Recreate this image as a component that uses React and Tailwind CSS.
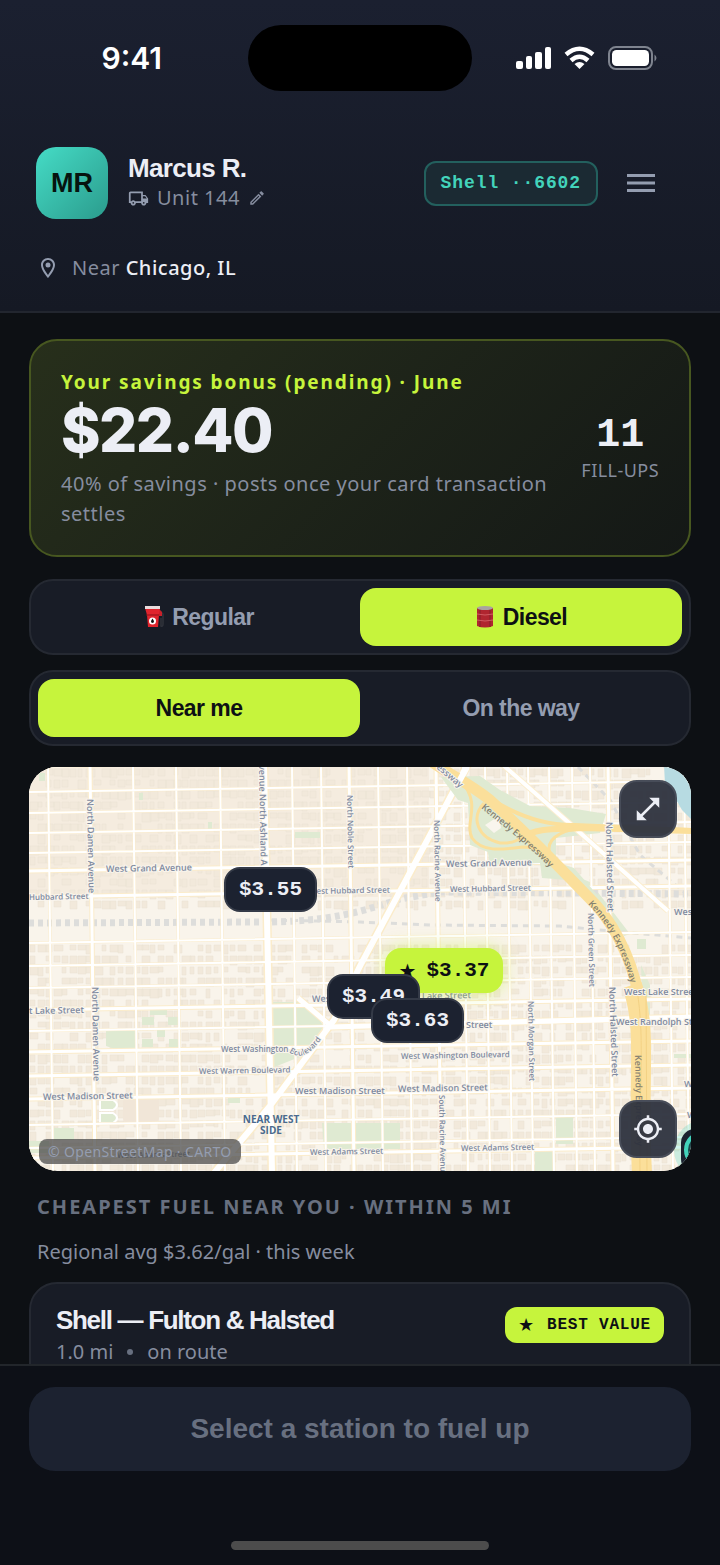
import React, { useState } from "react";
import {
  MdMyLocation,
  MdOpenInFull,
  MdOutlineEdit,
  MdOutlineLocalShipping,
  MdOutlineLocationOn,
} from "react-icons/md";

const head = "font-['Liberation_Sans',Arial,sans-serif]";
const body = "font-['Noto_Sans','Open_Sans',sans-serif]";
const mono = "font-['Liberation_Mono','Courier_New',monospace]";

// ---------- map data, in map units ----------
// every street leans the same way, so one x (or y) at the edge is enough
const minorV = [48, 133, 176, 220, 292, 321, 378, 407, 463, 485, 507, 528, 549, 572, 590, 668, 684];
const minorH = [767, 792, 813, 833, 853, 943, 966, 988, 1031, 1125, 1148];
const mainV = [90, 349, 436, 608];
const mainH = [871, 897, 1010, 1052, 1076, 1099, 1158];

const parks = [
  "M272 1002h35l18 26-13 24-40 16z",
  "M150 1008h17v7h-17zM142 1017h12v8h-12zM168 1017h12v8h-12zM106 1030h31v19h-22l-9-3z",
  "M142 1039h11v8h-11zM157 1029h8v8h-8zM169 1039h12v9h-12z",
  "M322 1123h78v26h-76zM228 1096h12v7h-12zM52 1128h22v12H52zM29 1141h20v12H29z",
  "M556 1117h17v27h-17zM535 1150h18v21h-18zM295 832h25v6h-25zM139 793h4v7h-4z",
  "M39 773h6v8h-6zM208 822h4v8h-4zM637 939h9v10h-9zM674 1054h17v4h-17z",
  "M580 878l10 4 40 52-6 2-20-22zM641 965l9 20v80l-6-10z",
];

const labels = [
  { t: "West Grand Avenue", x: 106, y: 872, r: -1, s: 9 },
  { t: "Hubbard Street", x: 29, y: 900, r: -1, s: 8 },
  { t: "North Damen Avenue", x: 87, y: 799, r: 89, s: 9 },
  { t: "North Damen Avenue", x: 92, y: 987, r: 89, s: 9 },
  { t: "venue North Ashland A", x: 259, y: 765, r: 89, s: 9 },
  { t: "North Noble Street", x: 347, y: 795, r: 89, s: 8 },
  { t: "West Hubbard Street", x: 309, y: 894, r: -1, s: 8 },
  { t: "West Grand Avenue", x: 446, y: 867, r: -1, s: 9 },
  { t: "West Hubbard Street", x: 450, y: 892, r: -1, s: 8 },
  { t: "North Racine Avenue", x: 434, y: 820, r: 89, s: 8 },
  { t: "North Halsted Street", x: 606, y: 822, r: 89, s: 9 },
  { t: "North Green Street", x: 588, y: 913, r: 89, s: 8 },
  { t: "North Halsted Street", x: 609, y: 987, r: 88, s: 9 },
  { t: "North Morgan Street", x: 528, y: 1001, r: 89, s: 8 },
  { t: "South Racine Avenue", x: 439, y: 1095, r: 89, s: 8 },
  { t: "t Lake Street", x: 29, y: 1014, r: -1, s: 9 },
  { t: "West Lake Street", x: 312, y: 1002, r: -1, s: 9 },
  { t: "Lake Street", x: 422, y: 999, r: -1, s: 9 },
  { t: "West Lake Street", x: 624, y: 995, r: 0, s: 9 },
  { t: "West Randolph Street", x: 616, y: 1025, r: 0, s: 9 },
  { t: "Street", x: 466, y: 1028, r: 0, s: 9 },
  { t: "West Washington", x: 221, y: 1052, r: 0, s: 8 },
  { t: "West Warren Boulevard", x: 199, y: 1074, r: -1, s: 8 },
  { t: "West Washington Boulevard", x: 401, y: 1059, r: -1, s: 8 },
  { t: "West Madison Street", x: 43, y: 1100, r: -1, s: 9 },
  { t: "West Madison Street", x: 295, y: 1094, r: 0, s: 9 },
  { t: "West Madison Street", x: 398, y: 1092, r: -1, s: 9 },
  { t: "West Adams Street", x: 117, y: 1158, r: -1, s: 8 },
  { t: "West Adams Street", x: 310, y: 1155, r: -1, s: 8 },
  { t: "West Adams Street", x: 461, y: 1151, r: -1, s: 8 },
  { t: "West", x: 674, y: 915, r: 0, s: 9 },
  { t: "West", x: 684, y: 1087, r: 0, s: 9 },
  { t: "West", x: 687, y: 1118, r: 0, s: 9 },
  { t: "essway", x: 436, y: 768, r: 40, s: 9 },
];

const KENNEDY =
  "M432 762C452 776 470 784 490 800C530 836 560 868 596 905C620 932 636 972 640 1005C644 1060 642 1110 642 1175";

// small building footprints, same ones on every render
const buildings = [];
let seed = 7;
const rand = () => {
  seed = (seed * 16807) % 2147483647;
  return seed / 2147483647;
};
for (let y = 769; y < 1170; y += 11) {
  for (let x = 30; x < 690; x += 8) {
    if (y > 905 && y < 938) continue;
    if (rand() < 0.22) continue;
    const w = 4 + Math.round(rand() * 5);
    const h = 5 + Math.round(rand() * 4);
    buildings.push(`M${x} ${y}h${w}v${h}h-${w}z`);
  }
}

const vPath = (xs) => xs.map((x) => `M${x} 765L${x + 5} 1173`).join("");
const hPath = (ys) => ys.map((y) => `M27 ${y}L693 ${y - 11}`).join("");
const OGDEN = "M469 762L360 966L334 1020L270 1106L214 1173";
const MILWAUKEE = "M503 765L568 822L668 911";
const ASHLAND = "M264 765L272 1173";
const RANDOLPH = "M298 998L332 1027L693 1017";

function FuelMap() {
  return (
    <svg
      viewBox="29 767 662 404"
      preserveAspectRatio="xMidYMid slice"
      className="block h-full w-full font-['Open_Sans',sans-serif]"
      role="img"
      aria-label="Map of Near West Side"
    >
      <rect x="29" y="767" width="662" height="404" fill="#f9f4eb" />
      <rect x="29" y="767" width="400" height="130" fill="#f5ecdf" />
      <path d={buildings.join("")} fill="#f2e9db" stroke="#ebe0d0" strokeWidth="0.5" />
      {parks.map((d) => (
        <path key={d} d={d} fill="#dfead2" />
      ))}
      <rect x="123" y="1097" width="36" height="27" rx="5" fill="#f1e6d8" />
      <path d="M100 1100h13q8 5 0 10h-13zM100 1113h13q8 5 0 10h-13z" fill="#dfead2" stroke="#fff" strokeWidth="2" />

      {/* rail yards */}
      <g fill="none" stroke="#dddddb">
        <path d="M29 923L260 922C330 922 360 912 400 899L440 892L691 894" strokeWidth="7" strokeDasharray="5 4" />
        <path d="M270 920L360 922L430 925L560 926L610 931L691 938" strokeWidth="3" strokeDasharray="6 5" />
        <path d="M578 767L610 800L640 855L691 898" strokeWidth="3" strokeDasharray="6 5" />
      </g>

      {/* streets: casing first, then the fill */}
      <g fill="none" stroke="#fbeccb">
        <path d={vPath(minorV) + hPath(minorH)} strokeWidth="3" />
        <path d={vPath(mainV) + hPath(mainH)} strokeWidth="5" />
        <path d={OGDEN + ASHLAND} strokeWidth="9" />
        <path d={RANDOLPH} strokeWidth="7" />
      </g>
      <g fill="none" stroke="#ffffff">
        <path d={vPath(minorV) + hPath(minorH)} strokeWidth="2" />
        <path d={vPath(mainV) + hPath(mainH)} strokeWidth="3" />
        <path d={OGDEN + ASHLAND} strokeWidth="6" />
        <path d={RANDOLPH} strokeWidth="5" />
      </g>

      {/* interchange */}
      <path
        d="M441 777L458 800L468 803L470 845L488 852L490 865L540 863L542 878L568 880L590 900L600 898L574 868L556 862L556 838L600 833L606 814L570 808L530 806L500 790L480 776z"
        fill="#dfead2"
      />
      <path d="M485 825l14-9 2 12-7 5z" fill="#f9f5ed" />
      <path d={MILWAUKEE} fill="none" stroke="#fbeed0" strokeWidth="6" />
      <path d={MILWAUKEE} fill="none" stroke="#fff" strokeWidth="4" />
      <path d="M664 765h30v57l-12-12-8-14-9-12z" fill="#b7dbe2" />
      <g fill="none" stroke="#fbdf9a">
        <path d="M462 782C482 806 464 822 472 838C482 852 500 850 522 847C538 847 546 852 556 864" strokeWidth="3" />
        <path d="M484 803C470 818 478 838 500 843C514 844 520 839 526 834" strokeWidth="3" />
        <path d="M468 783C500 808 535 826 575 825L691 830" strokeWidth="4" />
        <path d="M520 838C540 826 560 830 582 828L691 831" strokeWidth="6" />
        <path d="M552 858C544 845 552 834 574 829" strokeWidth="3" />
        <path d={KENNEDY} strokeWidth="11" />
        <path d="M632 985C648 1030 637 1070 642 1175" strokeWidth="20" />
      </g>
      <path d="M637 990C645 1040 639 1080 640 1173M646 990L647 1173" fill="none" stroke="#f3d184" strokeWidth="1" />
      <path d="M467 767L456 787" stroke="#fff" strokeWidth="6" />

      <path id="boulevard" d="M289 1052Q306 1065 326 1032" fill="none" />
      <g fill="#7f8a9f" fontWeight="600" stroke="#f9f5ed" strokeWidth="2" paintOrder="stroke">
        {labels.map(({ t, x, y, r, s }) => (
          <text key={`${t}${x}${y}`} fontSize={s} transform={`translate(${x} ${y}) rotate(${r})`}>
            {t}
          </text>
        ))}
        <text fontSize="8">
          <textPath href="#boulevard">Boulevard</textPath>
        </text>
      </g>
      <g fill="#84806f" fontSize="9" fontWeight="600">
        <path id="kennedyA" d="M481 808C505 828 530 846 562 880" fill="none" />
        <path id="kennedyB" d="M588 904C608 925 622 945 634 996" fill="none" />
        <text>
          <textPath href="#kennedyA">Kennedy Expressway</textPath>
        </text>
        <text>
          <textPath href="#kennedyB">Kennedy Expressway</textPath>
        </text>
        <text transform="translate(635 1055) rotate(89)">Kennedy Expressway</text>
      </g>
      <g fill="#4a6a8e" fontSize="10" fontWeight="700" textAnchor="middle">
        <text x="271" y="1123">NEAR WEST</text>
        <text x="271" y="1134">SIDE</text>
      </g>

      {/* current position */}
      <circle cx="704" cy="1150" r="30" fill="#43d3bb" fillOpacity="0.25" />
      <rect x="681" y="1129" width="40" height="44" rx="14" fill="#1c2230" />
      <circle cx="703" cy="1150" r="17" fill="#1c4a4c" stroke="#43d3bb" strokeWidth="4" />
    </svg>
  );
}

function StatusIcons() {
  return (
    <svg viewBox="0 0 142 24" className="h-6 w-[142px]" fill="#fff" aria-hidden="true">
      <rect x="0" y="15" width="7" height="8" rx="2" />
      <rect x="10" y="10" width="6" height="13" rx="2" />
      <rect x="19" y="6" width="7" height="17" rx="2" />
      <rect x="29" y="1" width="6" height="22" rx="2" />
      <g fill="none" stroke="#fff" strokeWidth="4.5">
        <path d="M50 8.500Q63.500 -3 77 8.500" />
        <path d="M55 14.500Q63.500 7 72 14.500" />
      </g>
      <path d="M63.500 23L58.500 18Q63.500 14 68.500 18Z" />
      <rect x="93" y="1" width="43" height="22" rx="7" fill="none" stroke="#7f848f" strokeWidth="2" />
      <rect x="96" y="4" width="37" height="16" rx="4.500" />
      <path d="M138.500 8.500q4 3.500 0 7z" fill="#7f848f" />
    </svg>
  );
}

function PumpIcon() {
  return (
    <svg viewBox="0 0 20 24" className="h-6 w-5" aria-hidden="true">
      <path d="M16 6l3 3v10q0 3-2 2v-8" fill="none" stroke="#30333b" strokeWidth="1.500" />
      <path d="M15 4l3 3v4h-3z" fill="#c8202a" />
      <path d="M1 3h15l-1 7-1 12H4L3 10z" fill="#e0242d" />
      <path d="M1 1h15v3H1z" fill="#e9dcdc" />
      <path d="M2 10h13" stroke="#8d1118" />
      <circle cx="8.500" cy="16" r="3.500" fill="#fff" />
      <path d="M8.500 13.500q3 4 0 4.500q-3-.5 0-4.500z" fill="#111" />
    </svg>
  );
}

function BarrelIcon() {
  return (
    <svg viewBox="0 0 20 24" className="h-6 w-5" aria-hidden="true">
      <path d="M2 3v18q8 3 16 0V3z" fill="#b0252f" />
      <path d="M5 4v18M15 4v18" stroke="#9a222c" strokeWidth="2" />
      <path d="M2 9q8 2 16 0M2 15q8 2 16 0" fill="none" stroke="#cf5a61" />
      <ellipse cx="10" cy="3" rx="8" ry="2" fill="#a9a3a0" />
    </svg>
  );
}

function Segmented({ label, options, value, onChange }) {
  return (
    <div
      role="group"
      aria-label={label}
      className="grid grid-cols-2 rounded-3xl border-2 border-[#252932] bg-[#181c26] p-[7px]"
    >
      {options.map(({ name, icon }) => (
        <button
          key={name}
          type="button"
          aria-pressed={value === name}
          onClick={() => onChange(name)}
          className={`${head} flex h-[58px] items-center justify-center gap-2 rounded-2xl text-[23px] font-bold tracking-tight ${
            value === name ? "bg-[#c6f43c] text-[#0d1014]" : "text-[#949db0]"
          }`}
        >
          {icon}
          {name}
        </button>
      ))}
    </div>
  );
}

const pin = `${mono} absolute flex h-[45px] items-center justify-center rounded-2xl text-[21px] font-bold`;
const darkPin = "w-[93px] border-2 border-[#343a47] bg-[#1c2230] text-[#eceef5]";
const mapButton =
  "absolute right-[14px] flex size-[58px] items-center justify-center rounded-[18px] border-2 border-[#484d59] bg-[#2d323e]/95 text-[#eceef5]";

export default function App() {
  const [fuel, setFuel] = useState("Diesel");
  const [mode, setMode] = useState("Near me");

  return (
    <div className={`${body} flex h-screen flex-col overflow-hidden bg-[#0d1014] text-[#eceef5]`}>
      <header className="shrink-0 border-b-2 border-[#22262f] bg-linear-to-b from-[#1b2030] to-[#151924]">
        <div className="grid grid-cols-[1fr_224px_1fr] items-center pt-[25px]">
          <div className="pr-[86px] text-right font-['Inter',sans-serif] text-[30px] leading-[66px] font-semibold text-white">
            9:41
          </div>
          <div className="h-[66px] rounded-full bg-black" />
          <div className="flex pl-11">
            <StatusIcons />
          </div>
        </div>

        <div className="flex items-center px-9 pt-14">
          <div
            className={`${head} flex size-[72px] items-center justify-center rounded-[20px] bg-linear-to-br from-[#45dcc6] to-[#2b9c8d] text-[27px] font-bold text-[#06140f]`}
          >
            MR
          </div>
          <div className="ml-5 flex-1">
            <div className={`${head} text-[26px] leading-[30px] font-bold tracking-tight`}>Marcus R.</div>
            <button type="button" className="flex items-center gap-2 text-xl leading-[30px] tracking-wide text-[#868d9f]">
              <MdOutlineLocalShipping className="size-[21px] text-[#949db0]" />
              Unit 144
              <MdOutlineEdit className="size-[18px]" />
            </button>
          </div>
          <button
            type="button"
            className={`${mono} h-[45px] rounded-xl border-2 border-[#23605e] bg-[#1b2a33] px-[15px] text-lg font-bold tracking-wider text-[#43d3bb]`}
          >
            Shell ··6602
          </button>
          <button type="button" aria-label="Menu" className="flex h-12 w-[86px] items-center justify-center">
            <svg viewBox="0 0 28 20" className="h-5 w-7" stroke="#949db0" strokeWidth="3" aria-hidden="true">
              <path d="M0 2.500H28M0 10H28M0 17.500H28" />
            </svg>
          </button>
        </div>

        <div className="flex items-center gap-3 px-9 pt-[34px] pb-7 text-xl leading-[30px] tracking-wide text-[#868d9f]">
          <MdOutlineLocationOn className="size-6 text-[#949db0]" />
          <p>
            Near <span className="font-medium text-[#eceef5]">Chicago, IL</span>
          </p>
        </div>
      </header>

      <main className="min-h-0 flex-1 overflow-y-auto px-[29px] pt-[26px] [scrollbar-width:none]">
        <section className="flex items-center justify-between rounded-[28px] border-2 border-[#475720] bg-linear-135 from-[#272f1b] to-[#141816] px-[30px] py-[26px]">
          <div className="min-w-0 flex-1">
            <h2 className="text-[19px] leading-[30px] font-bold tracking-widest text-[#c6f43c]">
              Your savings bonus (pending) · June
            </h2>
            <div className="pb-[6px] font-['Inter',sans-serif] text-[60px] leading-[66px] font-extrabold tracking-tight">
              $22.40
            </div>
            <p className="text-xl leading-[30px] tracking-wide text-[#868d9f]">
              40% of savings · posts once your card transaction settles
            </p>
          </div>
          <div className="ml-3 shrink-0 text-center">
            <div className={`${mono} pt-1 text-[40px] leading-10 font-bold`}>11</div>
            <div className="text-lg leading-7 tracking-wide text-[#868d9f]">FILL-UPS</div>
          </div>
        </section>

        <div className="mt-[22px] flex flex-col gap-[15px]">
          <Segmented
            label="Fuel"
            value={fuel}
            onChange={setFuel}
            options={[
              { name: "Regular", icon: <PumpIcon /> },
              { name: "Diesel", icon: <BarrelIcon /> },
            ]}
          />
          <Segmented label="Search area" value={mode} onChange={setMode} options={[{ name: "Near me" }, { name: "On the way" }]} />
        </div>

        <section className="relative mt-[21px] h-[404px] overflow-hidden rounded-[28px]">
          <FuelMap />
          <button type="button" className={`${pin} ${darkPin} top-[100px] left-[195px]`}>
            $3.55
          </button>
          <button
            type="button"
            className={`${pin} top-[181px] left-[356px] w-[118px] gap-[10px] bg-[#c6f43c] text-[#0d1014] shadow-[0_0_18px_#c6f43c80]`}
          >
            <span className="font-['DejaVu_Sans',sans-serif] text-xl">★</span>
            $3.37
          </button>
          <button type="button" className={`${pin} ${darkPin} top-[207px] left-[298px]`}>
            $3.49
          </button>
          <button type="button" className={`${pin} ${darkPin} top-[231px] left-[342px]`}>
            $3.63
          </button>
          <button type="button" aria-label="Expand map" className={`${mapButton} top-[13px]`}>
            <MdOpenInFull className="size-[30px]" />
          </button>
          <button type="button" aria-label="Centre on me" className={`${mapButton} bottom-[13px]`}>
            <MdMyLocation className="size-[30px]" />
          </button>
          <div className="absolute bottom-[7px] left-[10px] rounded-lg bg-[#4b4b4b]/75 px-[9px] text-sm leading-[25px] tracking-wide text-[#949db0]">
            © OpenStreetMap · CARTO
          </div>
        </section>

        <h2 className="mt-[21px] pl-2 text-xl leading-[30px] font-bold tracking-widest text-[#687080]">
          CHEAPEST FUEL NEAR YOU · WITHIN 5 MI
        </h2>
        <p className="mt-[15px] pl-2 text-xl leading-[30px] text-[#868d9f]">Regional avg $3.62/gal · this week</p>

        <article className="mt-[15px] flex items-start justify-between rounded-[28px] border-2 border-[#252932] bg-[#181c26] px-[25px] pt-[23px] pb-8">
          <div>
            <h3 className={`${head} text-[26px] leading-[26px] font-bold tracking-tighter`}>Shell — Fulton &amp; Halsted</h3>
            <p className="mt-1 flex items-center gap-[14px] text-xl leading-[30px] text-[#868d9f]">
              1.0 mi <span className="size-[6px] rounded-full bg-[#687080]" /> on route
            </p>
          </div>
          <div
            className={`${mono} flex h-9 items-center gap-3 rounded-xl bg-[#c6f43c] px-[13px] text-base font-bold tracking-wider text-[#0d1014]`}
          >
            <span className="font-['DejaVu_Sans',sans-serif] text-lg">★</span>
            BEST VALUE
          </div>
        </article>
      </main>

      <footer className="shrink-0 border-t-2 border-[#22262b] bg-[#0d1017] px-[29px] pt-[21px] pb-[15px]">
        <button
          type="button"
          disabled
          className={`${head} h-[84px] w-full rounded-[26px] bg-[#1c2230] text-[28px] font-bold text-[#687080]`}
        >
          Select a station to fuel up
        </button>
        <div className="mx-auto mt-[70px] h-[9px] w-[258px] rounded-full bg-[#4c4c4c]" />
      </footer>
    </div>
  );
}
